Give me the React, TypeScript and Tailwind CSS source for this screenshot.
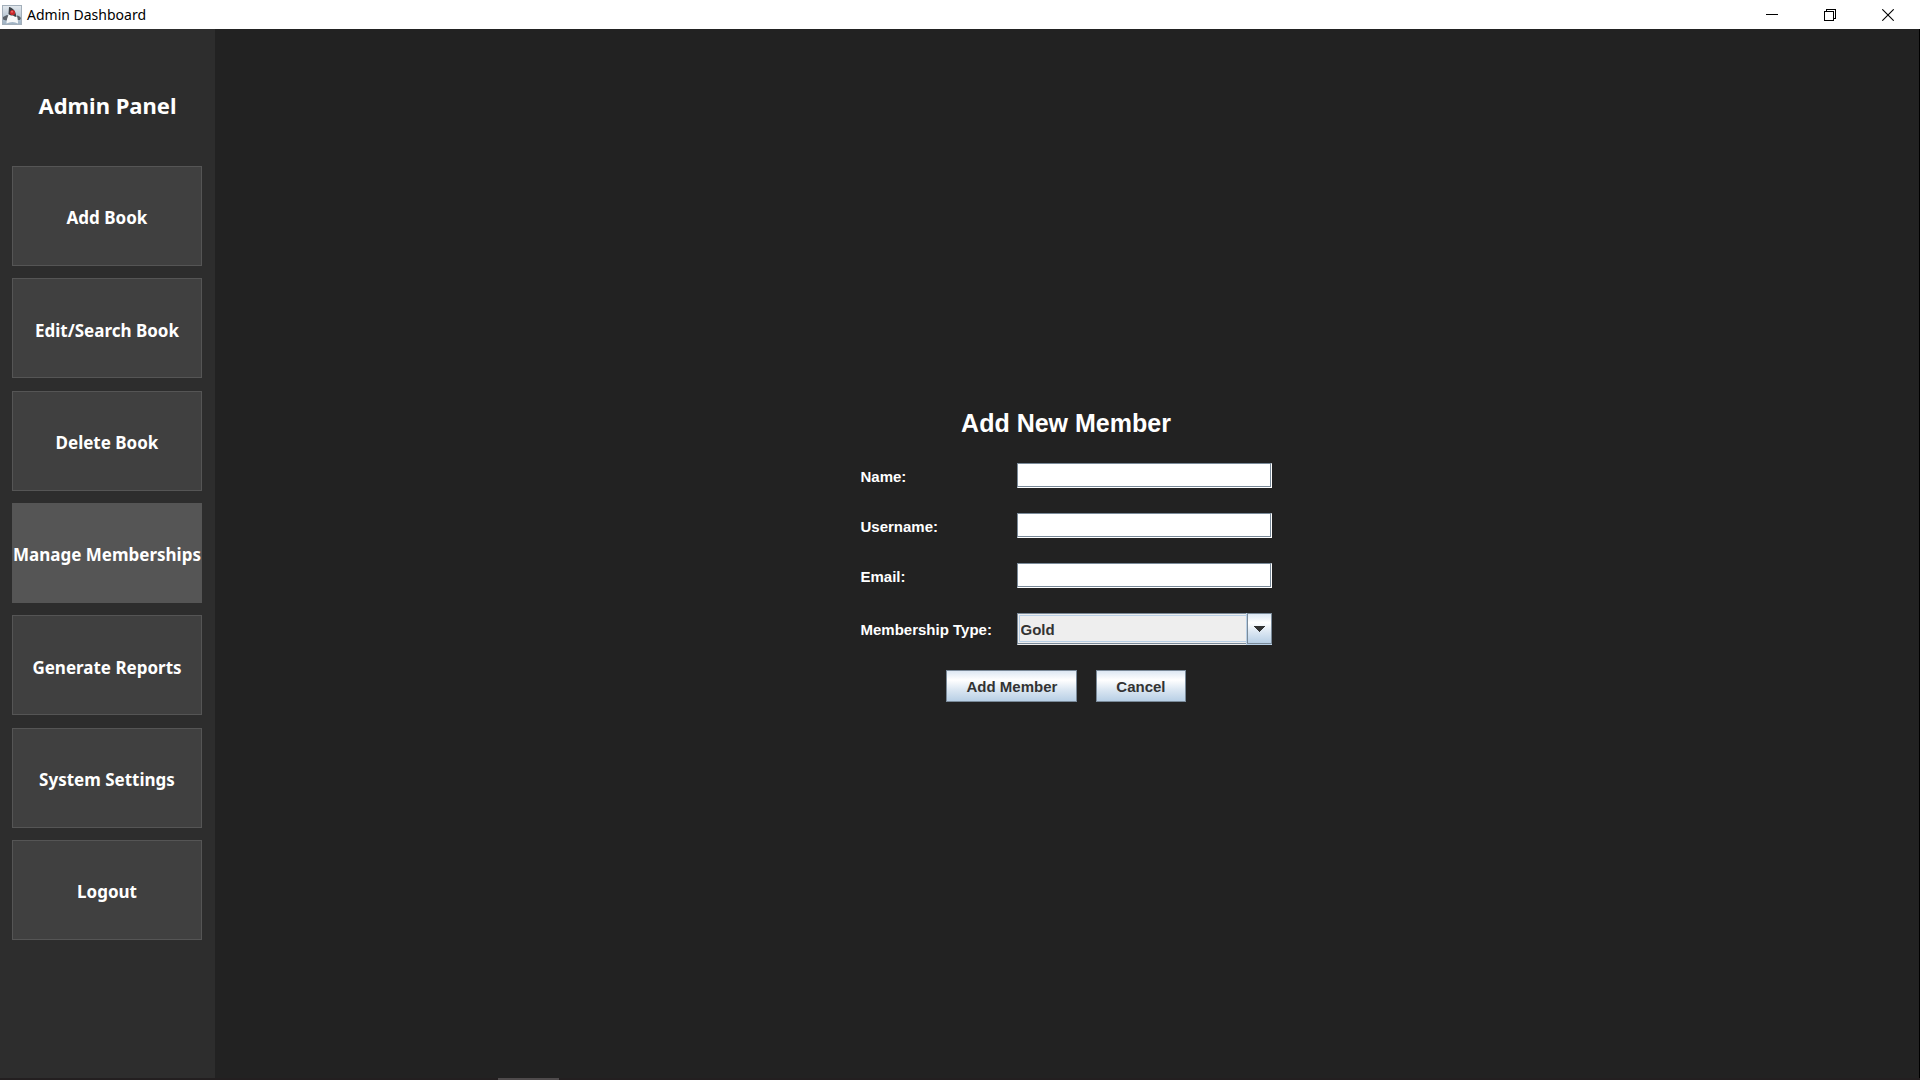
import React from "react";

const NAV = [
  "Add Book",
  "Edit/Search Book",
  "Delete Book",
  "Manage Memberships",
  "Generate Reports",
  "System Settings",
  "Logout",
];

const ACTIVE = "Manage Memberships";

const FIELDS = [
  { id: "name", label: "Name:", type: "text" },
  { id: "username", label: "Username:", type: "text" },
  { id: "email", label: "Email:", type: "email" },
];

function JavaIcon() {
  return (
    <svg viewBox="0 0 20 20" className="size-5" aria-hidden="true">
      <defs>
        <linearGradient id="tile" x1="0" y1="0" x2="0" y2="1">
          <stop offset="0" stopColor="#e3e9ee" />
          <stop offset="1" stopColor="#9db1c3" />
        </linearGradient>
      </defs>
      <rect x="0.5" y="0.5" width="19" height="19" fill="url(#tile)" stroke="#a3afba" />
      <path d="M1 12l4-2 3 1-1 4-3 0.5-3-1zM13 10l4 1 2 2-1 2-4 0z" fill="#5a6169" />
      <path d="M7 9c-1.500 3-2.500 6-2.500 9.500 2-0.500 3.500-1.500 6-1.500s3.500 1 5.500 1.500c0-4-0.500-7-2-9.500z" fill="#f6f8f9" />
      <path d="M7 2c3 0.500 6 3 7 7.500l0.500 2.500c-1.500 0-2.500-1-3.500-1.500-2 0-3.500-0.500-4.500-1.500z" fill="#3a3e43" />
      <circle cx="10.500" cy="7.500" r="2.600" fill="#c9282d" />
      <circle cx="10" cy="6.800" r="1" fill="#ee6a66" />
    </svg>
  );
}

function TitleBar() {
  return (
    <header className="flex h-[29px] shrink-0 items-center bg-white pr-[3px] pl-0.5 text-black">
      <JavaIcon />
      <h1 className="ml-[5px] grow font-['Noto_Sans',sans-serif] text-[14px] leading-5">Admin Dashboard</h1>
      <button type="button" aria-label="Minimize" className="flex h-full w-[58px] items-center justify-center">
        <svg viewBox="0 0 12 12" className="size-3" shapeRendering="crispEdges" aria-hidden="true">
          <path d="M0 5h12v1H0z" />
        </svg>
      </button>
      <button type="button" aria-label="Restore" className="flex h-full w-[58px] items-center justify-center">
        <svg viewBox="0 0 12 12" className="size-3" fill="none" stroke="#000" shapeRendering="crispEdges" aria-hidden="true">
          <path d="M0.5 2.5h9v9h-9zM2.5 2.5v-2h9v9h-2" />
        </svg>
      </button>
      <button type="button" aria-label="Close" className="flex h-full w-[58px] items-center justify-center">
        <svg viewBox="0 0 12 12" className="size-3" stroke="#000" strokeWidth="1.1" aria-hidden="true">
          <path d="M0.3 0.3l11.4 11.4M11.7 0.3L0.3 11.7" />
        </svg>
      </button>
    </header>
  );
}

function Sidebar() {
  return (
    <aside className="flex w-[215px] shrink-0 flex-col bg-[#2d2d2d] px-3 pt-[61px] pb-[138px] font-['Noto_Sans',sans-serif] font-bold text-white">
      <h2 className="mb-[46px] text-center text-[22px] leading-[30px]">Admin Panel</h2>
      <nav className="flex grow flex-col justify-between">
        {NAV.map((item) => (
          <button
            key={item}
            type="button"
            aria-current={item === ACTIVE ? "page" : undefined}
            className={
              item === ACTIVE
                ? "flex h-[100px] w-[190px] items-center justify-center border border-[#555555] bg-[#555555] pt-1 text-[17px] whitespace-nowrap"
                : "flex h-[100px] w-[190px] items-center justify-center border border-[#555555] bg-[#404040] pt-1 text-[17px] whitespace-nowrap"
            }
          >
            {item}
          </button>
        ))}
      </nav>
    </aside>
  );
}

function ActionButton({ children, type }: { children: React.ReactNode; type: "submit" | "button" }) {
  return (
    <button
      type={type}
      className="h-8 border border-[#7a8a99] bg-[linear-gradient(#dde8f3,#ffffff_30%,#dde8f3_60%,#b8cfe5)] px-[19px] pt-0.5 text-[#333333]"
    >
      {children}
    </button>
  );
}

function MemberForm() {
  return (
    <form
      onSubmit={(e) => e.preventDefault()}
      className="flex flex-col gap-[25px] font-['Liberation_Sans',Arial,sans-serif] text-[15px] leading-[18px] font-bold text-white"
    >
      <h2 className="text-center text-[25px] leading-[29px]">Add New Member</h2>
      <div className="grid grid-cols-[131px_255px] items-center gap-[25px]">
        {FIELDS.map((f) => (
          <React.Fragment key={f.id}>
            <label htmlFor={f.id} className="pt-0.5 whitespace-nowrap">{f.label}</label>
            <input
              id={f.id}
              type={f.type}
              className="h-[25px] w-full border border-t-[#7a8a99] border-r-white border-b-white border-l-[#7a8a99] bg-white px-1 text-[#333333] shadow-[inset_-1px_-1px_0_#7a8a99] outline-none"
            />
          </React.Fragment>
        ))}
        <label htmlFor="type" className="pt-0.5 whitespace-nowrap">Membership Type:</label>
        <div className="relative flex h-8">
          <select
            id="type"
            defaultValue="Gold"
            className="w-full appearance-none border border-[#7a8a99] border-b-[#eeeeee] bg-[#eeeeee] pt-px pl-[3px] text-[#333333] shadow-[inset_0_-1px_0_#7a8a99,inset_1px_1px_0_#eeeeee,inset_0_-2px_0_#eeeeee,inset_2px_2px_0_#b8cfe5,inset_0_-3px_0_#b8cfe5] outline-none"
          >
            <option>Gold</option>
            <option>Silver</option>
            <option>Bronze</option>
          </select>
          <span className="pointer-events-none absolute top-0 right-0 flex h-8 w-[26px] items-center justify-center border-b border-l border-b-[#b8cfe5] border-l-[#b8cfe5]">
            <span className="flex h-full w-full items-center justify-center border border-[#7a8a99] bg-[linear-gradient(#dde8f3,#ffffff_30%,#dde8f3_60%,#b8cfe5)]">
              <svg viewBox="0 0 12 6" className="h-1.5 w-3" shapeRendering="crispEdges" aria-hidden="true">
                <path d="M0 0h12L6 6z" fill="#333333" />
              </svg>
            </span>
          </span>
        </div>
      </div>
      <div className="flex justify-center gap-[19px]">
        <ActionButton type="submit">Add Member</ActionButton>
        <ActionButton type="button">Cancel</ActionButton>
      </div>
    </form>
  );
}

export default function App() {
  return (
    <div className="flex min-h-screen flex-col bg-[#222222]">
      <TitleBar />
      <div className="flex grow border-r border-black">
        <Sidebar />
        <main className="flex grow items-center justify-center pt-1 pr-0.5">
          <MemberForm />
        </main>
      </div>
      <footer className="flex h-0.5 shrink-0 bg-[#231f20] pl-[498px]">
        <div className="w-[61px] bg-[#4f4b4c]" />
      </footer>
    </div>
  );
}
